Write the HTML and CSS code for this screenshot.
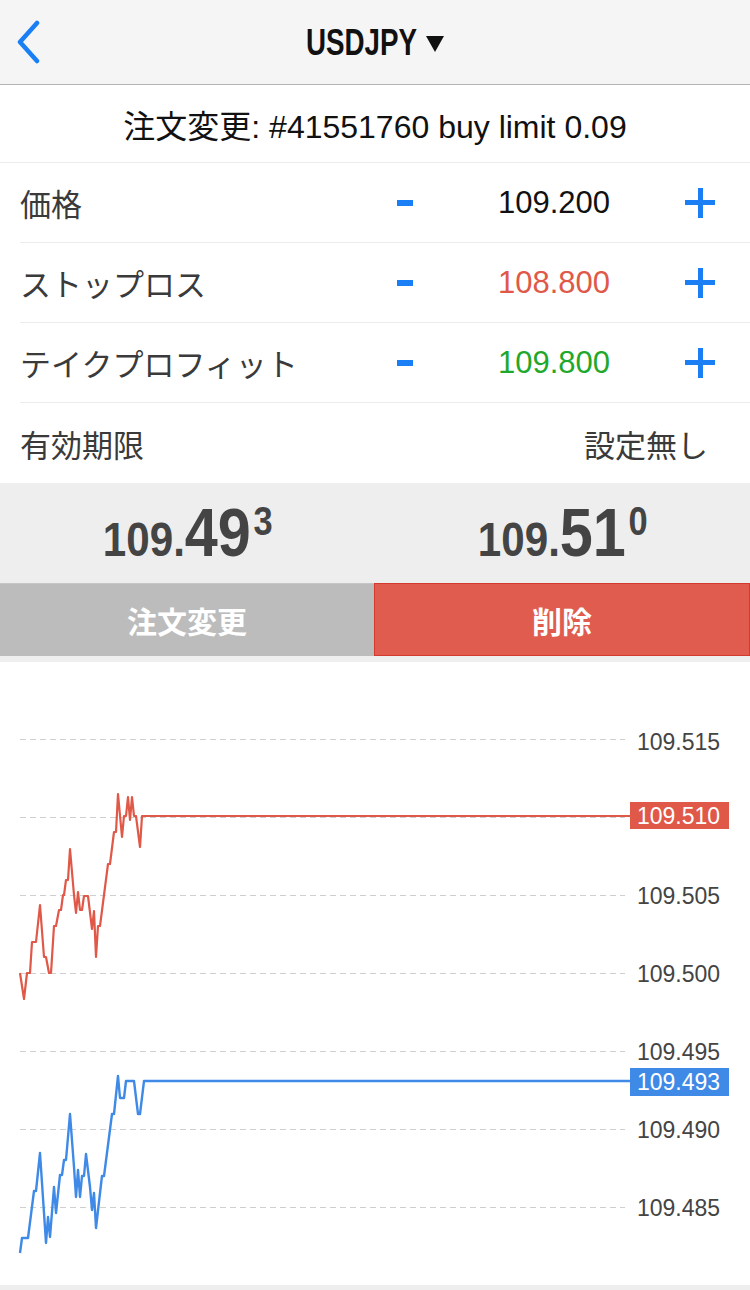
FILE: index.html
```html
<!DOCTYPE html>
<html lang="ja">
<head>
    <meta charset="UTF-8">
    <meta name="viewport" content="width=device-width, initial-scale=1.0">
    <title>USDJPY 注文変更</title>
    <link rel="stylesheet" href="styles.css">
</head>
<body>
    <header class="nav">
        <svg class="back" width="30" height="44" viewBox="0 0 30 44">
            <path d="M23 3 L6 22 L23 41" fill="none" stroke="#1a7ff5" stroke-width="4.5" stroke-linecap="round" stroke-linejoin="round"/>
        </svg>
        <h1 class="nav-title"><span>USDJPY</span><svg class="caret" width="24" height="16" viewBox="0 0 24 16"><path d="M0 0 H24 L12 16 Z" fill="#111"/></svg></h1>
        <span></span>
    </header>

    <div class="order-title">注文変更: #41551760 buy limit 0.09</div>

    <ul class="params">
        <li class="param">
            <span class="label">価格</span>
            <span class="step minus"></span>
            <span class="value">109.200</span>
            <span class="step plus"></span>
        </li>
        <li class="param">
            <span class="label">ストップロス</span>
            <span class="step minus"></span>
            <span class="value sl">108.800</span>
            <span class="step plus"></span>
        </li>
        <li class="param">
            <span class="label">テイクプロフィット</span>
            <span class="step minus"></span>
            <span class="value tp">109.800</span>
            <span class="step plus"></span>
        </li>
        <li class="param expiry">
            <span class="label">有効期限</span>
            <span class="expiry-value">設定無し</span>
        </li>
    </ul>

    <div class="quotes">
        <div class="quote"><span class="q-num"><span class="q-small">109.</span><span class="q-big">49</span><span class="q-sup">3</span></span></div>
        <div class="quote"><span class="q-num"><span class="q-small">109.</span><span class="q-big">51</span><span class="q-sup">0</span></span></div>
    </div>

    <div class="actions">
        <button class="btn modify">注文変更</button>
        <button class="btn delete">削除</button>
    </div>

    <div class="chart">
        <svg width="750" height="623" viewBox="0 662 750 623">
            <g class="grid" stroke="#cfcfcf" stroke-width="1" stroke-dasharray="6 4">
                <line x1="20" y1="739.5" x2="625" y2="739.5"/>
                <line x1="20" y1="817.5" x2="625" y2="817.5"/>
                <line x1="20" y1="895.5" x2="625" y2="895.5"/>
                <line x1="20" y1="973.5" x2="625" y2="973.5"/>
                <line x1="20" y1="1051.5" x2="625" y2="1051.5"/>
                <line x1="20" y1="1129.5" x2="625" y2="1129.5"/>
                <line x1="20" y1="1207.5" x2="625" y2="1207.5"/>
            </g>
            <polyline fill="none" stroke="#e05848" stroke-width="2.2" stroke-linejoin="round"
                points="20,973 24,999 27,973 30,973 32,942 36,942 40,905 44,957 46,957 49,973 51,973 54,926 56,926 59,910 61,910 63,895 64,895 66,880 68,880 70,849 74,895 76,913 78,892 80,910 82,910 84,896 88,896 92,929 94,911 96,957 98,926 100,926 104,895 108,864 110,864 114,832 116,832 118,794 122,837 124,816 126,816 128,797 130,820 132,797 134,816 136,816 140,847 142,816 632,816"/>
            <polyline fill="none" stroke="#3f8ae6" stroke-width="2.4" stroke-linejoin="round"
                points="20,1253 22,1238 28,1238 34,1191 36,1191 40,1153 46,1243 48,1217 50,1237 54,1187 56,1213 60,1175 62,1175 64,1160 66,1160 70,1114 74,1167 76,1197 78,1170 80,1197 82,1176 84,1176 86,1154 90,1187 92,1210 94,1193 96,1228 100,1193 102,1176 104,1176 108,1145 112,1114 114,1114 118,1076 120,1098 124,1098 126,1081 134,1081 138,1114 140,1114 144,1081 632,1081"/>
            <g class="axis">
                <text x="637" y="742">109.515</text>
                <text x="637" y="896">109.505</text>
                <text x="637" y="974">109.500</text>
                <text x="637" y="1052">109.495</text>
                <text x="637" y="1130">109.490</text>
                <text x="637" y="1208">109.485</text>
            </g>
            <rect x="630" y="802" width="99" height="27" fill="#e05848"/>
            <text class="tag" x="637" y="816">109.510</text>
            <rect x="630" y="1068" width="99" height="28" fill="#3f8ae6"/>
            <text class="tag" x="637" y="1082">109.493</text>
        </svg>
    </div>
    <div class="bottom-strip"></div>
</body>
</html>
```

FILE: styles.css
```css
body {
    margin: 0;
    width: 750px;
    background-color: #fff;
    font-family: "Liberation Sans", "Noto Sans CJK JP", sans-serif;
    color: #333;
}
.nav {
    height: 84px;
    background-color: #f5f5f5;
    border-bottom: 1px solid #b4b4b4;
    display: grid;
    grid-template-columns: 60px 1fr 60px;
    align-items: center;
}
.back {
    margin-left: 14px;
}
/* no condensed face installed, so the bold face is narrowed */
.nav-title {
    margin: 0;
    font-family: "Liberation Sans", sans-serif;
    font-weight: 700;
    font-size: 37px;
    line-height: 1;
    color: #111;
    display: flex;
    justify-content: center;
    align-items: center;
    gap: 12px;
    transform: scaleX(0.75);
}
.caret {
    margin-top: 3px;
}
.order-title {
    height: 77px;
    border-bottom: 1px solid #ececec;
    display: flex;
    justify-content: center;
    align-items: center;
    font-size: 32px;
    color: #111;
}
.params {
    list-style: none;
    margin: 0;
    padding: 0;
}
.param {
    height: 79px;
    margin-left: 20px;
    border-bottom: 1px solid #ececec;
    display: grid;
    grid-template-columns: 1fr 50px 180px 130px;
    align-items: center;
    padding-right: 10px;
}
.param.expiry {
    height: 80px;
    border-bottom: none;
    display: flex;
    justify-content: space-between;
    padding-right: 42px;
}
.label,
.expiry-value {
    font-size: 31px;
    color: #3a3a3a;
}
.step {
    justify-self: center;
}
.step.minus {
    width: 16px;
    height: 6px;
    background-color: #1a7ff5;
}
.step.plus {
    justify-self: end;
    margin-right: 25px;
    width: 30px;
    height: 30px;
    background:
        linear-gradient(#1a7ff5, #1a7ff5) center / 30px 5px no-repeat,
        linear-gradient(#1a7ff5, #1a7ff5) center / 5px 30px no-repeat;
}
.value {
    text-align: right;
    font-size: 31px;
    color: #111;
}
.value.sl {
    color: #e05848;
}
.value.tp {
    color: #1fa82b;
}
.quotes {
    height: 100px;
    background-color: #eeeeee;
    display: flex;
}
.quote {
    flex: 1;
    display: flex;
    justify-content: center;
    align-items: flex-start;
    padding-top: 15px;
}
.q-num {
    display: inline-block;
    font-family: "Liberation Sans", sans-serif;
    font-weight: 700;
    font-size: 40px;
    line-height: 1;
    color: #444;
    white-space: nowrap;
    transform: scaleX(0.86);
}
.q-small {
    font-size: 49px;
}
.q-big {
    font-size: 69px;
}
.q-sup {
    display: inline-block;
    vertical-align: top;
    padding-top: 3px;
    margin-left: 3px;
    font-size: 40px;
}
.actions {
    height: 73px;
    display: flex;
    border-bottom: 6px solid #efefef;
}
.btn {
    flex: 1;
    border: none;
    margin: 0;
    font-family: "Liberation Sans", "Noto Sans CJK JP", sans-serif;
    font-weight: 700;
    font-size: 30px;
    color: #fff;
    cursor: pointer;
}
.btn.modify {
    background-color: #bcbcbc;
    border-top: 1px solid #c6c6c6;
}
.btn.delete {
    background-color: #e05c4e;
    border: 1px solid #d23a2e;
}
.chart {
    height: 623px;
}
.chart svg {
    display: block;
}
.axis text,
.tag {
    font-family: "Liberation Sans", sans-serif;
    font-size: 23px;
    dominant-baseline: central;
}
.axis text {
    fill: #444;
}
.tag {
    fill: #fff;
}
.bottom-strip {
    height: 5px;
    background-color: #eeeeee;
}
```
